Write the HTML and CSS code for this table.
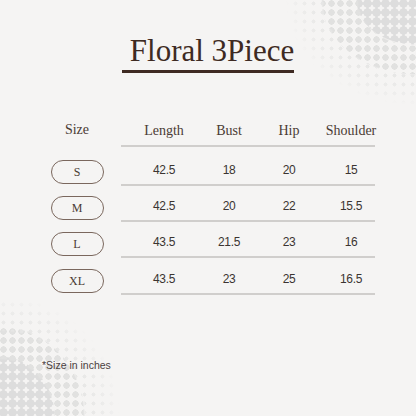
FILE: index.html
```html
<!DOCTYPE html>
<html>
<head>
<meta charset="utf-8">
<link rel="stylesheet" href="styles.css">
</head>
<body>
<div class="page">
  <div class="dots tr d1"></div>
  <div class="dots tr d2"></div>
  <div class="dots tr d3"></div>
  <div class="dots bl d1"></div>
  <div class="dots bl d2"></div>
  <div class="dots bl d3"></div>
  <header class="title-wrap">
    <h1 class="title">Floral 3Piece</h1>
  </header>
  <div class="chart">
    <div class="hd size-col">Size</div>
    <div class="hd cell">Length</div>
    <div class="hd cell">Bust</div>
    <div class="hd cell">Hip</div>
    <div class="hd cell">Shoulder</div>

    <div class="size-col"><span class="pill">S</span></div>
    <div class="num cell">42.5</div>
    <div class="num cell">18</div>
    <div class="num cell">20</div>
    <div class="num cell">15</div>

    <div class="size-col"><span class="pill">M</span></div>
    <div class="num cell">42.5</div>
    <div class="num cell">20</div>
    <div class="num cell">22</div>
    <div class="num cell">15.5</div>

    <div class="size-col"><span class="pill">L</span></div>
    <div class="num cell">43.5</div>
    <div class="num cell">21.5</div>
    <div class="num cell">23</div>
    <div class="num cell">16</div>

    <div class="size-col"><span class="pill">XL</span></div>
    <div class="num cell">43.5</div>
    <div class="num cell">23</div>
    <div class="num cell">25</div>
    <div class="num cell">16.5</div>
  </div>
  <p class="note">*Size in inches</p>
</div>
</body>
</html>
```

FILE: styles.css
```css
html, body {
  margin: 0;
  padding: 0;
}
body {
  background: #f5f4f3;
  width: 416px;
  height: 416px;
  overflow: hidden;
}
.page {
  position: relative;
  width: 416px;
  height: 416px;
  display: flex;
  flex-direction: column;
}
.dots {
  position: absolute;
  width: 135px;
  height: 126px;
  background-size: 9px 9px;
}
.tr {
  top: 0;
  right: 0;
  background-position: right -1px top -1px;
}
.bl {
  bottom: 0;
  left: 0;
  width: 126px;
  background-position: left -1px bottom -1px;
}
.d1 { background-image: radial-gradient(circle, #dddddd 0 4.1px, transparent 4.5px); }
.d2 { background-image: radial-gradient(circle, #e1e1e0 0 3px, transparent 3.4px); }
.d3 { background-image: radial-gradient(circle, #e6e6e5 0 1.8px, transparent 2.2px); }
.tr.d1 {
  -webkit-mask-image: radial-gradient(ellipse 60px 45px at 100% 0%, #000 98%, transparent 100%);
  mask-image: radial-gradient(ellipse 60px 45px at 100% 0%, #000 98%, transparent 100%);
}
.tr.d2 {
  -webkit-mask-image: radial-gradient(ellipse 95px 75px at 100% 0%, transparent 60%, #000 62%, #000 98%, transparent 100%);
  mask-image: radial-gradient(ellipse 95px 75px at 100% 0%, transparent 60%, #000 62%, #000 98%, transparent 100%);
}
.tr.d3 {
  -webkit-mask-image: radial-gradient(ellipse 130px 105px at 100% 0%, transparent 70%, #000 72%, rgba(0,0,0,0.5) 90%, transparent 100%);
  mask-image: radial-gradient(ellipse 130px 105px at 100% 0%, transparent 70%, #000 72%, rgba(0,0,0,0.5) 90%, transparent 100%);
}
.bl.d1 {
  -webkit-mask-image: radial-gradient(ellipse 55px 60px at 0% 100%, #000 98%, transparent 100%);
  mask-image: radial-gradient(ellipse 55px 60px at 0% 100%, #000 98%, transparent 100%);
}
.bl.d2 {
  -webkit-mask-image: radial-gradient(ellipse 85px 90px at 0% 100%, transparent 62%, #000 64%, #000 98%, transparent 100%);
  mask-image: radial-gradient(ellipse 85px 90px at 0% 100%, transparent 62%, #000 64%, #000 98%, transparent 100%);
}
.bl.d3 {
  -webkit-mask-image: radial-gradient(ellipse 120px 120px at 0% 100%, transparent 70%, #000 72%, rgba(0,0,0,0.5) 90%, transparent 100%);
  mask-image: radial-gradient(ellipse 120px 120px at 0% 100%, transparent 70%, #000 72%, rgba(0,0,0,0.5) 90%, transparent 100%);
}
.title-wrap {
  position: relative;
  display: flex;
  justify-content: center;
  padding-top: 33px;
}
.title {
  margin: 0;
  font-family: "Liberation Serif", serif;
  font-weight: normal;
  font-size: 31px;
  line-height: 35px;
  color: #3e2a22;
  padding: 0 0 2px 8px;
  border-bottom: 3px solid #3e2a22;
}
.chart {
  position: relative;
  margin: 44px 0 0 40px;
  display: grid;
  grid-template-columns: 81px 86px 44px 76px 48px;
  grid-template-rows: 30px 39px 36px 36px 37px;
}
.size-col {
  padding-right: 7px;
  display: flex;
  justify-content: center;
  align-items: flex-end;
}
.hd {
  font-family: "Liberation Serif", serif;
  font-size: 14px;
  line-height: 16px;
  color: #4a3b34;
}
.cell {
  display: flex;
  justify-content: center;
  align-items: flex-end;
  border-bottom: 2px solid #d0cecc;
  box-sizing: border-box;
}
.hd.size-col {
  padding-bottom: 9px;
}
.hd.cell {
  padding-bottom: 6px;
}
.num {
  font-family: "Liberation Sans", Arial, sans-serif;
  font-size: 12px;
  letter-spacing: -0.3px;
  line-height: 14px;
  color: #3b3431;
  padding-bottom: 7px;
}
.pill {
  box-sizing: border-box;
  width: 53px;
  height: 24px;
  margin-bottom: 2px;
  border: 1.5px solid #7a675d;
  border-radius: 12px;
  display: flex;
  align-items: center;
  justify-content: center;
  font-family: "Liberation Serif", serif;
  font-size: 12px;
  color: #4a3b34;
}
.note {
  position: relative;
  margin: 64px 0 0 42px;
  font-family: "Liberation Sans", Arial, sans-serif;
  font-size: 10.5px;
  line-height: 13px;
  color: #4a4140;
}
```
